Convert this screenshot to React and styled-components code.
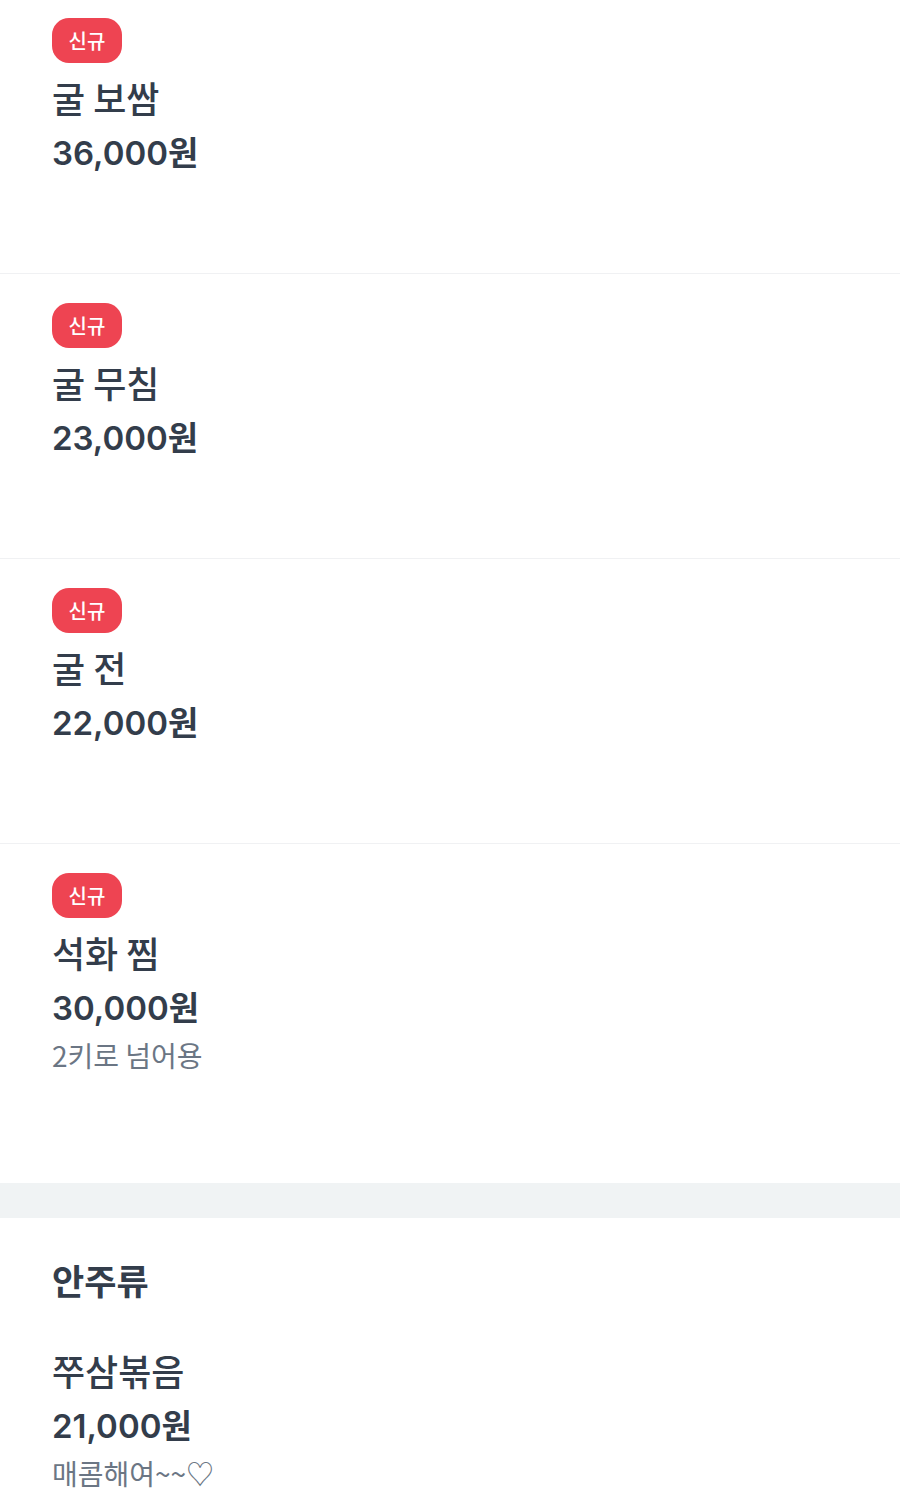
import React from 'react'
import styled, { createGlobalStyle } from 'styled-components'

const GlobalStyle = createGlobalStyle`
  html, body {
    margin: 0;
    padding: 0;
    background: #ffffff;
  }
  body {
    font-family: "Noto Sans CJK KR", "Noto Sans", sans-serif;
    color: #333d4b;
  }
`

const sections = [
  {
    title: null,
    items: [
      { name: '굴 보쌈', price: '36,000원', badge: true },
      { name: '굴 무침', price: '23,000원', badge: true },
      { name: '굴 전', price: '22,000원', badge: true },
      { name: '석화 찜', price: '30,000원', badge: true, desc: '2키로 넘어용' },
    ],
  },
  {
    title: '안주류',
    items: [{ name: '쭈삼볶음', price: '21,000원', desc: '매콤해여~~♡' }],
  },
]

function App() {
  return (
    <>
      <GlobalStyle />
      <Page>
        {sections.map((section, si) => (
          <React.Fragment key={si}>
            {si > 0 && <Band />}
            <Section $last={si === sections.length - 1}>
              {section.title && <SectionTitle>{section.title}</SectionTitle>}
              {section.items.map((item, i) => (
                <Item key={item.name} $first={si === 0 && i === 0} $divider={i < section.items.length - 1}>
                  {item.badge && <Badge>신규</Badge>}
                  <Name>{item.name}</Name>
                  <Price>{item.price}</Price>
                  {item.desc && <Desc>{item.desc}</Desc>}
                </Item>
              ))}
            </Section>
          </React.Fragment>
        ))}
      </Page>
    </>
  )
}

const Page = styled.main`
  width: 900px;
  height: 1510px;
  overflow: hidden;
  background: #ffffff;
`

const Section = styled.section`
  padding-bottom: ${(p) => (p.$last ? '0' : '19px')};
`

const Band = styled.div`
  height: 35px;
  background: #f0f3f4;
`

const SectionTitle = styled.h2`
  margin: 0;
  padding: 35px 52px 7px;
  font-size: 35px;
  line-height: 54px;
  font-weight: 700;
  color: #333d4b;
`

const Item = styled.div`
  display: flex;
  flex-direction: column;
  align-items: flex-start;
  padding: ${(p) => (p.$first ? '18px' : '29px')} 52px 91px;
  border-bottom: ${(p) => (p.$divider ? '1px solid #f0f1f3' : 'none')};
`

const Badge = styled.span`
  display: inline-flex;
  align-items: center;
  justify-content: center;
  width: 70px;
  height: 45px;
  margin-bottom: 7px;
  border-radius: 17px;
  background: #ee4452;
  color: #ffffff;
  font-size: 20px;
  font-weight: 500;
`

const Name = styled.div`
  font-size: 36px;
  line-height: 54px;
  font-weight: 500;
  color: #333d4b;
`

const Price = styled.div`
  font-family: "Inter", "Noto Sans CJK KR", sans-serif;
  font-size: 33px;
  line-height: 58px;
  font-weight: 600;
  color: #333d4b;
`

const Desc = styled.div`
  font-size: 28px;
  line-height: 36px;
  font-weight: 400;
  color: #6b7684;
`

export default App
